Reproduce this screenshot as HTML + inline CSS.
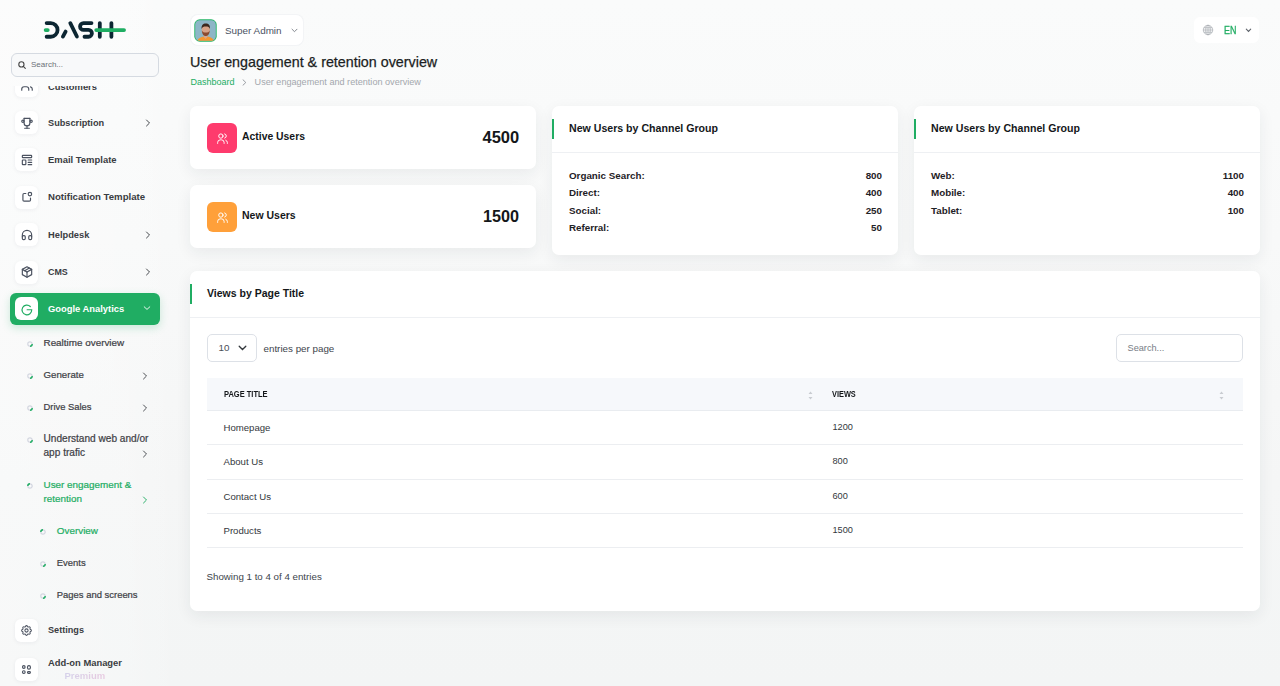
<!DOCTYPE html>
<html><head><meta charset="utf-8">
<style>
*{box-sizing:border-box;margin:0;padding:0}
html,body{width:1280px;height:686px;overflow:hidden}
body{font-family:"Liberation Sans",sans-serif;background:linear-gradient(180deg,#fafbfb 0%,#f8f9f9 35%,#f5f6f6 70%,#f3f5f5 100%);position:relative;color:#1b1e22}
.a{position:absolute}
.nw{white-space:nowrap}
#side{position:absolute;left:0;top:0;width:180px;height:686px;background:linear-gradient(90deg,rgba(255,255,255,.35) 0%,rgba(255,255,255,.2) 70%,rgba(255,255,255,0) 100%)}
.ib{position:absolute;left:15px;width:23px;height:23px;background:#fff;border-radius:6px;box-shadow:0 1px 4px rgba(30,40,60,.06)}
.ib svg{position:absolute;left:4.5px;top:4.5px;width:14px;height:14px}
.mi{position:absolute;left:48px;font-size:9.4px;font-weight:700;color:#3a3d42;line-height:12px;white-space:nowrap}
.chev{position:absolute;width:6px;height:8px}
.sub{position:absolute;font-size:9.9px;color:#3e4146;-webkit-text-stroke:0.22px currentColor;line-height:14px;white-space:nowrap}
.bul{position:absolute;width:6px;height:6px}
.card{position:absolute;background:#fff;border-radius:7px;box-shadow:0 5px 16px rgba(30,40,50,.07)}
</style></head>
<body>
<div id="side">
  <!-- logo -->
  <svg class="a" style="left:40px;top:16px" width="90" height="28" viewBox="0 0 90 28">
    <g fill="none" stroke-linecap="round" stroke-width="3.8">
      <path d="M6.65 7.05H10.7A6.85 6.85 0 0 1 10.7 20.75H6.65" stroke="#0c2632"/>
      <path d="M22.9 20.6L25.6 15.6M30.3 7.2L36.9 20.5" stroke="#0c2632"/>
      <path d="M51.5 7.05H43.5A3.45 3.45 0 0 0 43.5 13.95H48.5A3.4 3.4 0 0 1 48.5 20.75H44.5" stroke="#0c2632"/>
      <path d="M59.8 7.05V20.75M71.4 7.05V20.75" stroke="#0c2632"/>
      <path d="M5.65 14.05H7.75M56.25 14.05H84.05" stroke="#1fae63"/>
    </g>
  </svg>
  <!-- search -->
  <div class="a" style="left:11px;top:53px;width:148px;height:23.5px;border:1px solid #d5dae1;border-radius:6px;background:#f8f9fa"></div>
  <svg class="a" style="left:18px;top:61px" width="8" height="8" viewBox="0 0 8 8"><circle cx="3.4" cy="3.4" r="2.6" fill="none" stroke="#444" stroke-width="1.1"/><path d="M5.3 5.3L7.3 7.3" stroke="#444" stroke-width="1.1" stroke-linecap="round"/></svg>
  <div class="a nw" style="left:31px;top:59px;font-size:8px;color:#6b7078;line-height:12px">Search...</div>

  <!-- scroll menu -->
  <div class="a" style="left:0;top:85.5px;width:180px;height:601px;overflow:hidden">
   <div class="a" style="left:0;top:-85.5px;width:180px;height:686px">
    <div class="ib" style="top:73.5px"><svg viewBox="0 0 24 24" fill="none" stroke="#4b5260" stroke-width="2" stroke-linecap="round" stroke-linejoin="round"><path d="M5 7a4 4 0 1 0 8 0a4 4 0 1 0-8 0"/><path d="M3 21v-2a4 4 0 0 1 4-4h4a4 4 0 0 1 4 4v2"/><path d="M16 3.13a4 4 0 0 1 0 7.75"/><path d="M21 21v-2a4 4 0 0 0-3-3.85"/></svg></div>
    <div class="mi" style="top:80.5px">Customers</div>

    <div class="ib" style="top:111px"><svg viewBox="0 0 24 24" fill="none" stroke="#4b5260" stroke-width="2" stroke-linecap="round" stroke-linejoin="round"><path d="M8 21h8"/><path d="M12 17v4"/><path d="M7 4h10"/><path d="M17 4v8a5 5 0 0 1-10 0v-8"/><path d="M3 9a2 2 0 1 0 4 0a2 2 0 1 0-4 0"/><path d="M17 9a2 2 0 1 0 4 0a2 2 0 1 0-4 0"/></svg></div>
    <div class="mi" style="top:116.5px;font-size:9.2px">Subscription</div>
    <svg class="chev" style="left:145px;top:118.5px" viewBox="0 0 6 8"><path d="M1.5 1L4.5 4L1.5 7" fill="none" stroke="#44484d" stroke-width="1" stroke-linecap="round"/></svg>

    <div class="ib" style="top:148px"><svg viewBox="0 0 24 24" fill="none" stroke="#4b5260" stroke-width="2" stroke-linecap="round" stroke-linejoin="round"><path d="M4 5a1 1 0 0 1 1-1h14a1 1 0 0 1 1 1v2a1 1 0 0 1-1 1h-14a1 1 0 0 1-1-1z"/><path d="M4 13a1 1 0 0 1 1-1h4a1 1 0 0 1 1 1v6a1 1 0 0 1-1 1h-4a1 1 0 0 1-1-1z"/><path d="M14 12h6"/><path d="M14 16h6"/><path d="M14 20h6"/></svg></div>
    <div class="mi" style="top:153.5px;font-size:9.45px">Email Template</div>

    <div class="ib" style="top:185.5px"><svg viewBox="0 0 24 24" fill="none" stroke="#4b5260" stroke-width="2" stroke-linecap="round" stroke-linejoin="round"><path d="M10 6h-3a2 2 0 0 0-2 2v9a2 2 0 0 0 2 2h9a2 2 0 0 0 2-2v-3"/><path d="M14 7a3 3 0 1 0 6 0a3 3 0 1 0-6 0"/></svg></div>
    <div class="mi" style="top:191px;font-size:9.65px">Notification Template</div>

    <div class="ib" style="top:223px"><svg viewBox="0 0 24 24" fill="none" stroke="#4b5260" stroke-width="2" stroke-linecap="round" stroke-linejoin="round"><path d="M4 15a2 2 0 0 1 2-2h1a2 2 0 0 1 2 2v3a2 2 0 0 1-2 2h-1a2 2 0 0 1-2-2z"/><path d="M15 15a2 2 0 0 1 2-2h1a2 2 0 0 1 2 2v3a2 2 0 0 1-2 2h-1a2 2 0 0 1-2-2z"/><path d="M4 15v-3a8 8 0 0 1 16 0v3"/></svg></div>
    <div class="mi" style="top:228.5px;font-size:9.3px">Helpdesk</div>
    <svg class="chev" style="left:145px;top:230.5px" viewBox="0 0 6 8"><path d="M1.5 1L4.5 4L1.5 7" fill="none" stroke="#44484d" stroke-width="1" stroke-linecap="round"/></svg>

    <div class="ib" style="top:260.5px"><svg viewBox="0 0 24 24" fill="none" stroke="#4b5260" stroke-width="2" stroke-linecap="round" stroke-linejoin="round"><path d="M12 3l8 4.5v9l-8 4.5l-8-4.5v-9l8-4.5"/><path d="M12 12l8-4.5"/><path d="M12 12v9"/><path d="M12 12l-8-4.5"/><path d="M16 5.25l-8 4.5"/></svg></div>
    <div class="mi" style="top:266px;font-size:8.9px">CMS</div>
    <svg class="chev" style="left:145px;top:268px" viewBox="0 0 6 8"><path d="M1.5 1L4.5 4L1.5 7" fill="none" stroke="#44484d" stroke-width="1" stroke-linecap="round"/></svg>

    <!-- Google analytics -->
    <div class="a" style="left:10px;top:292.5px;width:150px;height:32.5px;background:#20ad63;border-radius:6px;box-shadow:0 3px 8px rgba(32,173,99,.22)"></div>
    <div class="ib" style="top:297px;box-shadow:none"><svg viewBox="0 0 24 24" fill="none" stroke="#20ad63" stroke-width="2" stroke-linecap="round"><path d="M17.67 7.73A8.3 8.3 0 1 0 20.1 13.3H12.2"/></svg></div>
    <div class="mi" style="top:303px;color:#fff">Google Analytics</div>
    <svg class="a" style="left:143px;top:305px" width="8" height="6" viewBox="0 0 8 6"><path d="M1.2 1.8L4 4.4L6.8 1.8" fill="none" stroke="#fff" stroke-width="0.9" stroke-linecap="round"/></svg>

    <!-- submenu -->
    <svg class="bul" style="left:26.5px;top:340.5px" viewBox="0 0 6 6"><circle cx="3" cy="3" r="2.2" fill="none" stroke="#d3d6e0" stroke-width="1.2"/><path d="M5.2 3A2.2 2.2 0 0 1 3 5.2" fill="none" stroke="#20ad63" stroke-width="1.4"/></svg>
    <div class="sub" style="left:43.5px;top:336px">Realtime overview</div>
    <svg class="bul" style="left:26.5px;top:372.5px" viewBox="0 0 6 6"><circle cx="3" cy="3" r="2.2" fill="none" stroke="#d3d6e0" stroke-width="1.2"/><path d="M5.2 3A2.2 2.2 0 0 1 3 5.2" fill="none" stroke="#20ad63" stroke-width="1.4"/></svg>
    <div class="sub" style="left:43.5px;top:368px;font-size:9.7px">Generate</div>
    <svg class="chev" style="left:142px;top:371.5px" viewBox="0 0 6 8"><path d="M1.5 1L4.5 4L1.5 7" fill="none" stroke="#44484d" stroke-width="0.95" stroke-linecap="round"/></svg>
    <svg class="bul" style="left:26.5px;top:404.5px" viewBox="0 0 6 6"><circle cx="3" cy="3" r="2.2" fill="none" stroke="#d3d6e0" stroke-width="1.2"/><path d="M5.2 3A2.2 2.2 0 0 1 3 5.2" fill="none" stroke="#20ad63" stroke-width="1.4"/></svg>
    <div class="sub" style="left:43.5px;top:400px;font-size:9.4px">Drive Sales</div>
    <svg class="chev" style="left:142px;top:403.5px" viewBox="0 0 6 8"><path d="M1.5 1L4.5 4L1.5 7" fill="none" stroke="#44484d" stroke-width="0.95" stroke-linecap="round"/></svg>
    <svg class="bul" style="left:26.5px;top:436.5px" viewBox="0 0 6 6"><circle cx="3" cy="3" r="2.2" fill="none" stroke="#d3d6e0" stroke-width="1.2"/><path d="M5.2 3A2.2 2.2 0 0 1 3 5.2" fill="none" stroke="#20ad63" stroke-width="1.4"/></svg>
    <div class="sub" style="left:43.5px;top:432px;font-size:10.1px">Understand web and/or<br>app trafic</div>
    <svg class="chev" style="left:142px;top:450px" viewBox="0 0 6 8"><path d="M1.5 1L4.5 4L1.5 7" fill="none" stroke="#44484d" stroke-width="0.95" stroke-linecap="round"/></svg>
    <svg class="bul" style="left:26.5px;top:482.5px" viewBox="0 0 6 6"><circle cx="3" cy="3" r="2.2" fill="none" stroke="#d3d6e0" stroke-width="1.2"/><path d="M0.8 3A2.2 2.2 0 0 1 3 0.8" fill="none" stroke="#20ad63" stroke-width="1.4"/></svg>
    <div class="sub" style="left:43.5px;top:478px;color:#22ad63">User engagement &amp;<br>retention</div>
    <svg class="chev" style="left:142px;top:496px" viewBox="0 0 6 8"><path d="M1.5 1L4.5 4L1.5 7" fill="none" stroke="#22ad63" stroke-width="0.95" stroke-linecap="round"/></svg>

    <svg class="bul" style="left:39.5px;top:528.5px" viewBox="0 0 6 6"><circle cx="3" cy="3" r="2.2" fill="none" stroke="#d3d6e0" stroke-width="1.2"/><path d="M0.8 3A2.2 2.2 0 0 1 3 0.8" fill="none" stroke="#20ad63" stroke-width="1.4"/></svg>
    <div class="sub" style="left:56.8px;top:524px;color:#22ad63">Overview</div>
    <svg class="bul" style="left:39.5px;top:560.5px" viewBox="0 0 6 6"><circle cx="3" cy="3" r="2.2" fill="none" stroke="#d3d6e0" stroke-width="1.2"/><path d="M5.2 3A2.2 2.2 0 0 1 3 5.2" fill="none" stroke="#20ad63" stroke-width="1.4"/></svg>
    <div class="sub" style="left:56.8px;top:556px;font-size:9.45px">Events</div>
    <svg class="bul" style="left:39.5px;top:592.5px" viewBox="0 0 6 6"><circle cx="3" cy="3" r="2.2" fill="none" stroke="#d3d6e0" stroke-width="1.2"/><path d="M5.2 3A2.2 2.2 0 0 1 3 5.2" fill="none" stroke="#20ad63" stroke-width="1.4"/></svg>
    <div class="sub" style="left:56.8px;top:588px;font-size:9.45px">Pages and screens</div>

    <div class="ib" style="top:618.5px"><svg style="left:4.9px;top:5.6px;width:13px;height:13px" viewBox="0 0 24 24" fill="none" stroke="#4b5260" stroke-width="1.9" stroke-linecap="round" stroke-linejoin="round"><path d="M10.325 4.317c.426-1.756 2.924-1.756 3.35 0a1.724 1.724 0 0 0 2.573 1.066c1.543-.94 3.31 .826 2.37 2.37a1.724 1.724 0 0 0 1.065 2.572c1.756 .426 1.756 2.924 0 3.35a1.724 1.724 0 0 0-1.066 2.573c.94 1.543-.826 3.31-2.37 2.37a1.724 1.724 0 0 0-2.572 1.065c-.426 1.756-2.924 1.756-3.35 0a1.724 1.724 0 0 0-2.573-1.066c-1.543 .94-3.31-.826-2.37-2.37a1.724 1.724 0 0 0-1.065-2.572c-1.756-.426-1.756-2.924 0-3.35a1.724 1.724 0 0 0 1.066-2.573c-.94-1.543 .826-3.31 2.37-2.37c1 .608 2.296 .07 2.572-1.065z"/><path d="M9 12a3 3 0 1 0 6 0a3 3 0 0 0-6 0"/></svg></div>
    <div class="mi" style="top:624px;font-size:9.15px">Settings</div>
    <div class="ib" style="top:658px"><svg style="left:4px;top:4px;width:14px;height:14px" viewBox="0 0 14 14" fill="none" stroke="#4b5260" stroke-width="1.15"><rect x="3.5" y="3.6" width="2.6" height="2.7" rx="1.3"/><rect x="8.5" y="3.6" width="2.9" height="3.6" rx="1.4"/><rect x="3.5" y="8.7" width="2.6" height="2.7" rx="1.2"/><rect x="8.5" y="9.6" width="2.9" height="1.8" rx=".9"/></svg></div>
    <div class="mi" style="top:656.5px">Add-on Manager</div>
    <div class="a nw" style="left:64.5px;top:670.2px;font-size:9.5px;font-weight:700;line-height:12px;color:#e0d3ea;background:linear-gradient(90deg,#d5d1ea,#e7c9e0);-webkit-background-clip:text;background-clip:text;-webkit-text-fill-color:transparent">Premium</div>
   </div>
  </div>
</div>

<div id="main">
  <!-- user dropdown -->
  <div class="a" style="left:190.5px;top:15px;width:112px;height:30px;background:#fff;border-radius:7px;box-shadow:0 0 0 1px rgba(236,238,242,.5)"></div>
  <svg class="a" style="left:194px;top:18.5px" width="23" height="23" viewBox="0 0 23 23">
    <defs><clipPath id="av"><rect x="1.2" y="1.2" width="20.6" height="20.6" rx="4.5"/></clipPath></defs>
    <rect x="0.3" y="0.3" width="22.4" height="22.4" rx="5.5" fill="#25b565"/>
    <g clip-path="url(#av)">
      <rect x="0" y="0" width="23" height="23" fill="#8db6c7"/>
      <path d="M3 23C3.5 19.5 6.5 17.8 11.5 17.6S19.5 19.5 20.5 23z" fill="#f5972f"/>
      <path d="M9.8 15.5h3.6v2.6l-1.8 2l-1.8-2z" fill="#d9a58a"/>
      <ellipse cx="11.8" cy="10.8" rx="4.1" ry="5" fill="#d7a287"/>
      <path d="M7.6 10C7.3 6 9 4.5 11.8 4.5S16.3 6 16 10C15.3 8.2 14 7.6 11.8 7.6S8.3 8.2 7.6 10z" fill="#3b271d"/>
      <path d="M7.8 11.5C8.2 16.2 10.2 17 11.8 17S15.4 16.2 15.8 11.5C15 13.3 13.5 13.6 11.8 13.6S8.6 13.3 7.8 11.5z" fill="#8b4a2f"/>
    </g>
  </svg>
  <div class="a nw" style="left:225px;top:24.5px;font-size:9.9px;color:#4a5262;line-height:12px">Super Admin</div>
  <svg class="a" style="left:290.5px;top:27.5px" width="7" height="5" viewBox="0 0 7 5"><path d="M1 1.2L3.5 3.7L6 1.2" fill="none" stroke="#777c84" stroke-width="0.9" stroke-linecap="round"/></svg>

  <!-- lang -->
  <div class="a" style="left:1194px;top:17px;width:65px;height:26px;background:#fff;border-radius:6px"></div>
  <svg class="a" style="left:1202px;top:24px" width="12" height="12" viewBox="0 0 24 24" fill="none" stroke="#a9adb3" stroke-width="1.5"><circle cx="12" cy="12" r="9.5"/><ellipse cx="12" cy="12" rx="4.5" ry="9.5"/><path d="M12 2.5v19M2.5 12h19M4 7.5h16M4 16.5h16"/></svg>
  <div class="a nw" style="left:1223.5px;top:23.8px;font-size:10.6px;color:#22ad63;line-height:12px;transform:scaleX(.84);transform-origin:0 0;-webkit-text-stroke:0.3px #22ad63">EN</div>
  <svg class="a" style="left:1244.5px;top:28px" width="7" height="5" viewBox="0 0 7 5"><path d="M1.3 1.2L3.5 3.4L5.7 1.2" fill="none" stroke="#5d626a" stroke-width="1.1" stroke-linecap="round"/></svg>

  <!-- title -->
  <div class="a nw" style="left:190px;top:54.3px;font-size:14.3px;color:#1b1e22;-webkit-text-stroke:0.25px currentColor;line-height:17px">User engagement &amp; retention overview</div>
  <div class="a nw" style="left:190.5px;top:76.8px;font-size:9px;color:#22ad63;line-height:11px">Dashboard</div>
  <svg class="a" style="left:242px;top:78.8px" width="5" height="7" viewBox="0 0 5 7"><path d="M1 0.8L3.8 3.5L1 6.2" fill="none" stroke="#8c9197" stroke-width="0.9" stroke-linecap="round"/></svg>
  <div class="a nw" style="left:254.6px;top:76.8px;font-size:9.1px;color:#a3a7ad;line-height:11px">User engagement and retention overview</div>

  <!-- stat cards -->
  <div class="card" style="left:190px;top:106px;width:346px;height:63px"></div>
  <div class="a" style="left:207px;top:122.5px;width:30px;height:30px;border-radius:6px;background:#fe3b6d"></div>
  <svg class="a" style="left:215.5px;top:131.5px" width="13" height="13" viewBox="0 0 24 24" fill="none" stroke="#fff" stroke-width="1.8" stroke-linecap="round"><circle cx="9" cy="7.5" r="4"/><path d="M3 21v-1.5a5 5 0 0 1 5-5h2a5 5 0 0 1 5 5V21M16 3.5a4 4 0 0 1 0 7.75M21 21v-1.5a5 5 0 0 0-3-4.4"/></svg>
  <div class="a nw" style="left:242px;top:130px;font-size:10.4px;font-weight:700;color:#14171a;line-height:13px">Active Users</div>
  <div class="a nw" style="left:482.5px;top:128px;font-size:16.5px;font-weight:700;color:#14171a;line-height:19px">4500</div>

  <div class="card" style="left:190px;top:185px;width:346px;height:63px"></div>
  <div class="a" style="left:207px;top:201.5px;width:30px;height:30px;border-radius:6px;background:#ffa03a"></div>
  <svg class="a" style="left:215.5px;top:210.5px" width="13" height="13" viewBox="0 0 24 24" fill="none" stroke="#fff" stroke-width="1.8" stroke-linecap="round"><circle cx="9" cy="7.5" r="4"/><path d="M3 21v-1.5a5 5 0 0 1 5-5h2a5 5 0 0 1 5 5V21M16 3.5a4 4 0 0 1 0 7.75M21 21v-1.5a5 5 0 0 0-3-4.4"/></svg>
  <div class="a nw" style="left:242px;top:209px;font-size:10.5px;font-weight:700;color:#14171a;line-height:13px">New Users</div>
  <div class="a nw" style="left:483px;top:207px;font-size:16.2px;font-weight:700;color:#14171a;line-height:19px">1500</div>

  <!-- channel cards -->
  <div class="card" style="left:552px;top:106px;width:346px;height:148.5px"></div>
  <div class="a" style="left:552px;top:119px;width:2px;height:20px;background:#20ad63"></div>
  <div class="a nw" style="left:569px;top:122px;font-size:10.6px;font-weight:700;color:#14171a;line-height:13px">New Users by Channel Group</div>
  <div class="a" style="left:552px;top:152px;width:346px;height:1px;background:#eef0f3"></div>
  <div class="a" style="left:569px;top:167px;width:313px;font-size:9.8px;font-weight:700;color:#1f2226;line-height:17.3px">
    <div style="display:flex;justify-content:space-between"><span>Organic Search:</span><span>800</span></div>
    <div style="display:flex;justify-content:space-between"><span>Direct:</span><span>400</span></div>
    <div style="display:flex;justify-content:space-between"><span>Social:</span><span>250</span></div>
    <div style="display:flex;justify-content:space-between"><span>Referral:</span><span>50</span></div>
  </div>

  <div class="card" style="left:914px;top:106px;width:346px;height:148.5px"></div>
  <div class="a" style="left:914px;top:119px;width:2px;height:20px;background:#20ad63"></div>
  <div class="a nw" style="left:931px;top:122px;font-size:10.6px;font-weight:700;color:#14171a;line-height:13px">New Users by Channel Group</div>
  <div class="a" style="left:914px;top:152px;width:346px;height:1px;background:#eef0f3"></div>
  <div class="a" style="left:931px;top:167px;width:313px;font-size:9.8px;font-weight:700;color:#1f2226;line-height:17.3px">
    <div style="display:flex;justify-content:space-between"><span>Web:</span><span>1100</span></div>
    <div style="display:flex;justify-content:space-between"><span>Mobile:</span><span>400</span></div>
    <div style="display:flex;justify-content:space-between"><span>Tablet:</span><span>100</span></div>
  </div>

  <!-- table card -->
  <div class="card" style="left:190px;top:271px;width:1070px;height:340px"></div>
  <div class="a" style="left:190px;top:284px;width:2px;height:20px;background:#20ad63"></div>
  <div class="a nw" style="left:207px;top:287px;font-size:10.5px;font-weight:700;color:#14171a;line-height:13px">Views by Page Title</div>
  <div class="a" style="left:190px;top:317px;width:1070px;height:1px;background:#eef0f3"></div>

  <div class="a" style="left:207px;top:334px;width:50px;height:28px;border:1px solid #dde1e7;border-radius:5px"></div>
  <div class="a nw" style="left:218.5px;top:342.2px;font-size:9.8px;color:#4a4f57;line-height:11px">10</div>
  <svg class="a" style="left:237.5px;top:345px" width="9" height="6" viewBox="0 0 9 6"><path d="M1.2 1.2L4.5 4.5L7.8 1.2" fill="none" stroke="#33373c" stroke-width="1.3" stroke-linecap="round"/></svg>
  <div class="a nw" style="left:263.5px;top:342.5px;font-size:9.8px;color:#40454c;line-height:11px">entries per page</div>

  <div class="a" style="left:1116px;top:334px;width:127px;height:28px;border:1px solid #dde1e7;border-radius:5px"></div>
  <div class="a nw" style="left:1127.5px;top:342.5px;font-size:9.2px;color:#777d85;line-height:11px">Search...</div>

  <div class="a" style="left:207px;top:378px;width:1036px;height:33px;background:#f6f8fb;border-bottom:1px solid #e9ecf0"></div>
  <div class="a nw" style="left:223.5px;top:390px;font-size:8.2px;font-weight:700;color:#14171a;line-height:9px;transform:scaleX(.915);transform-origin:0 0">PAGE TITLE</div>
  <div class="a nw" style="left:832.2px;top:390px;font-size:8.2px;font-weight:700;color:#14171a;line-height:9px;transform:scaleX(.9);transform-origin:0 0">VIEWS</div>
  <svg class="a" style="left:808px;top:390px" width="5" height="11" viewBox="0 0 5 11"><path d="M0.5 4L2.5 1.5L4.5 4z M0.5 7L2.5 9.5L4.5 7z" fill="#c9ccd1"/></svg>
  <svg class="a" style="left:1219px;top:390px" width="5" height="11" viewBox="0 0 5 11"><path d="M0.5 4L2.5 1.5L4.5 4z M0.5 7L2.5 9.5L4.5 7z" fill="#c9ccd1"/></svg>

  <div class="a nw" style="left:223.5px;top:421.5px;font-size:9.6px;color:#33373c;line-height:11px">Homepage</div>
  <div class="a nw" style="left:832.5px;top:421.5px;font-size:9.2px;color:#33373c;line-height:11px">1200</div>
  <div class="a" style="left:207px;top:444px;width:1036px;height:1px;background:#eceef1"></div>
  <div class="a nw" style="left:223.5px;top:456px;font-size:9.6px;color:#33373c;line-height:11px">About Us</div>
  <div class="a nw" style="left:832.5px;top:456px;font-size:9.2px;color:#33373c;line-height:11px">800</div>
  <div class="a" style="left:207px;top:478.5px;width:1036px;height:1px;background:#eceef1"></div>
  <div class="a nw" style="left:223.5px;top:490.5px;font-size:9.6px;color:#33373c;line-height:11px">Contact Us</div>
  <div class="a nw" style="left:832.5px;top:490.5px;font-size:9.2px;color:#33373c;line-height:11px">600</div>
  <div class="a" style="left:207px;top:513px;width:1036px;height:1px;background:#eceef1"></div>
  <div class="a nw" style="left:223.5px;top:525px;font-size:9.6px;color:#33373c;line-height:11px">Products</div>
  <div class="a nw" style="left:832.5px;top:525px;font-size:9.2px;color:#33373c;line-height:11px">1500</div>
  <div class="a" style="left:207px;top:547px;width:1036px;height:1px;background:#eceef1"></div>

  <div class="a nw" style="left:206.5px;top:570.5px;font-size:9.74px;color:#40454c;line-height:11px">Showing 1 to 4 of 4 entries</div>
</div>
</body></html>
